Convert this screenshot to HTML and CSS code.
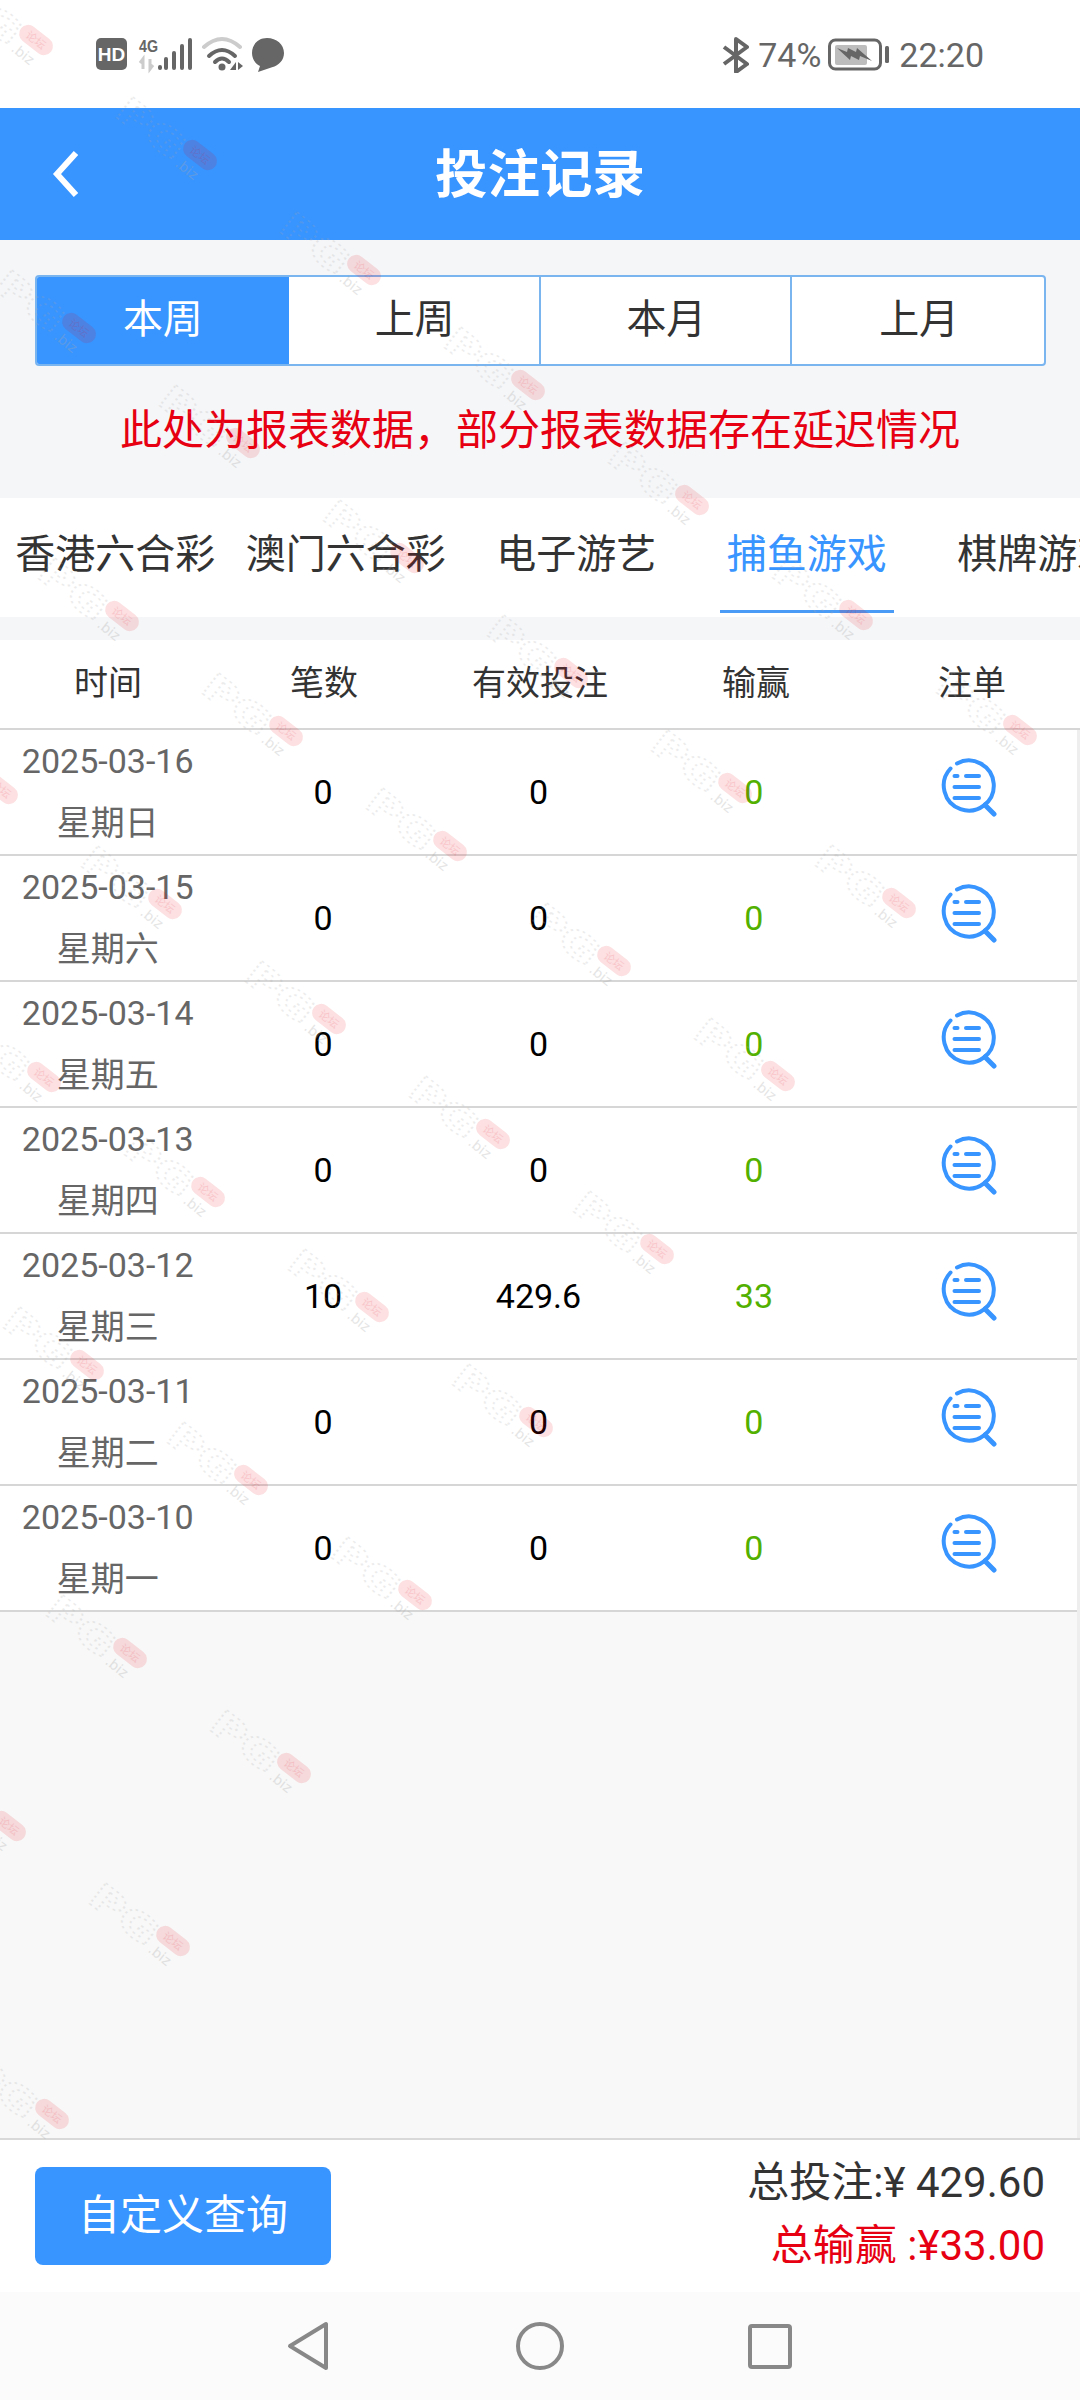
FILE: index.html
```html
<!DOCTYPE html>
<html lang="zh-CN">

<head>
  <meta charset="UTF-8">
  <meta name="viewport" content="width=device-width, initial-scale=1.0">
  <title>投注记录</title>
  <link rel="stylesheet" href="styles.css">
</head>

<body>
  <svg class="icon-defs" width="0" height="0">
    <defs>
      <symbol id="icon-detail" viewBox="0 0 60 60">
        <path class="detail-ring" d="M12.5 11.5A25 25 0 1 0 19 6.5" />
        <path class="detail-line" d="M16.5 19h3M28 19h13M16.5 30h24.5M16.5 41h24.5" />
        <path class="detail-handle" d="M47 48l9 9" />
      </symbol>
      <g id="mark" class="mark">
        <text class="mark-pg" x="-17" y="22" text-anchor="end" textLength="76" lengthAdjust="spacingAndGlyphs">PG</text>
        <rect class="mark-pill" x="-19" y="-9" width="38" height="18" rx="9" />
        <text class="mark-pill-text" x="0" y="4" text-anchor="middle">论坛</text>
        <text class="mark-biz" x="-14" y="24">.biz</text>
      </g>
    </defs>
  </svg>

  <div class="status-bar">
    <svg class="status-left" viewBox="95 36 195 38" width="195" height="38">
      <rect class="st-fill" x="96" y="38" width="31" height="32" rx="5" />
      <text class="st-hd" x="111.5" y="60.5" text-anchor="middle">HD</text>
      <text class="st-4g" x="139" y="52" textLength="19" lengthAdjust="spacingAndGlyphs">4G</text>
      <path class="st-dim" d="M143 69v-10l-3 4M150 59v10l3-4" />
      <rect class="st-fill" x="158" y="65" width="4" height="5" rx="2" />
      <rect class="st-fill" x="164" y="57" width="4" height="13" rx="2" />
      <rect class="st-fill" x="172" y="51" width="4" height="19" rx="2" />
      <rect class="st-fill" x="180" y="44" width="4" height="26" rx="2" />
      <rect class="st-fill" x="188" y="38" width="4" height="32" rx="2" />
      <path class="st-arc-dim" d="M204 47Q222 31 240 47" />
      <path class="st-arc" d="M209 56Q222 44 235 56M215 62Q222 55 229 62" />
      <circle class="st-fill" cx="222" cy="67" r="3.5" />
      <path class="st-fill" d="M236 62v8h-6zM238 62l5 4-5 4z" />
      <path class="st-fill" d="M267 38c9.500 0 17 6.500 17 15 0 7-5 12.500-12 14.300L258 72l2-6c-5-2.500-8-7.500-8-13 0-8.500 6-15 15-15z" />
    </svg>
    <div class="status-right">
      <svg viewBox="0 0 28 36" width="28" height="36">
        <path class="st-bt" d="M2 10l23 17-11 8V2l11 8L2 27" />
      </svg>
      <span class="status-pct">74%</span>
      <svg viewBox="0 0 62 34" width="62" height="34">
        <rect class="st-batt" x="1.500" y="2" width="51" height="29" rx="6" />
        <rect class="st-batt-level" x="7" y="7" width="32" height="20" rx="2" />
        <path class="st-fill" d="M9 10l10 4 1-4 8 4 1-4 15 13-12-5-1 4-8-4-1 4z" />
        <rect class="st-fill" x="57" y="8" width="4" height="17" rx="1.500" />
      </svg>
      <span class="status-time">22:20</span>
    </div>
  </div>

  <header class="top-bar">
    <svg class="back-icon" viewBox="0 0 30 48" width="30" height="48">
      <path d="M25 3L6 24l19 21" />
    </svg>
    <h1>投注记录</h1>
  </header>

  <div class="period-tabs">
    <div class="period-tab active">本周</div>
    <div class="period-tab">上周</div>
    <div class="period-tab">本月</div>
    <div class="period-tab">上月</div>
  </div>

  <p class="notice">此处为报表数据，部分报表数据存在延迟情况</p>

  <nav class="game-tabs">
    <div class="game-tab">香港六合彩</div>
    <div class="game-tab">澳门六合彩</div>
    <div class="game-tab">电子游艺</div>
    <div class="game-tab active"><span>捕鱼游戏</span></div>
    <div class="game-tab">棋牌游戏</div>
  </nav>

  <div class="table-head">
    <div>时间</div>
    <div>笔数</div>
    <div>有效投注</div>
    <div>输赢</div>
    <div>注单</div>
  </div>

  <main class="records">
    <div class="record-row">
      <div class="record-date">2025-03-16<br>星期日</div>
      <div>0</div>
      <div>0</div>
      <div class="win">0</div>
      <div><svg class="detail-icon"><use href="#icon-detail" /></svg></div>
    </div>
    <div class="record-row">
      <div class="record-date">2025-03-15<br>星期六</div>
      <div>0</div>
      <div>0</div>
      <div class="win">0</div>
      <div><svg class="detail-icon"><use href="#icon-detail" /></svg></div>
    </div>
    <div class="record-row">
      <div class="record-date">2025-03-14<br>星期五</div>
      <div>0</div>
      <div>0</div>
      <div class="win">0</div>
      <div><svg class="detail-icon"><use href="#icon-detail" /></svg></div>
    </div>
    <div class="record-row">
      <div class="record-date">2025-03-13<br>星期四</div>
      <div>0</div>
      <div>0</div>
      <div class="win">0</div>
      <div><svg class="detail-icon"><use href="#icon-detail" /></svg></div>
    </div>
    <div class="record-row">
      <div class="record-date">2025-03-12<br>星期三</div>
      <div>10</div>
      <div>429.6</div>
      <div class="win">33</div>
      <div><svg class="detail-icon"><use href="#icon-detail" /></svg></div>
    </div>
    <div class="record-row">
      <div class="record-date">2025-03-11<br>星期二</div>
      <div>0</div>
      <div>0</div>
      <div class="win">0</div>
      <div><svg class="detail-icon"><use href="#icon-detail" /></svg></div>
    </div>
    <div class="record-row">
      <div class="record-date">2025-03-10<br>星期一</div>
      <div>0</div>
      <div>0</div>
      <div class="win">0</div>
      <div><svg class="detail-icon"><use href="#icon-detail" /></svg></div>
    </div>
  </main>

  <footer class="summary">
    <button class="query-btn">自定义查询</button>
    <div class="totals">
      <div>总投注:¥ 429.60</div>
      <div class="totals-win">总输赢 :¥33.00</div>
    </div>
  </footer>

  <div class="nav-bar">
    <svg viewBox="0 0 48 52" width="48" height="52">
      <path d="M42 4v44L6 26z" />
    </svg>
    <svg viewBox="0 0 48 52" width="48" height="52">
      <circle cx="24" cy="26" r="22" />
    </svg>
    <svg viewBox="0 0 48 52" width="48" height="52">
      <rect x="2" y="6" width="40" height="41" rx="2" />
    </svg>
  </div>

  <!-- site watermark, repeats over the page -->
  <svg class="watermarks" viewBox="0 0 1080 2400" width="1080" height="2400">
    <use href="#mark" x="36" y="40" />
    <use href="#mark" x="200" y="155" />
    <use href="#mark" x="79" y="328" />
    <use href="#mark" x="364" y="270" />
    <use href="#mark" x="243" y="443" />
    <use href="#mark" x="122" y="616" />
    <use href="#mark" x="1" y="789" />
    <use href="#mark" x="528" y="385" />
    <use href="#mark" x="407" y="558" />
    <use href="#mark" x="286" y="731" />
    <use href="#mark" x="165" y="904" />
    <use href="#mark" x="44" y="1077" />
    <use href="#mark" x="692" y="500" />
    <use href="#mark" x="571" y="673" />
    <use href="#mark" x="450" y="846" />
    <use href="#mark" x="329" y="1019" />
    <use href="#mark" x="208" y="1192" />
    <use href="#mark" x="87" y="1365" />
    <use href="#mark" x="856" y="615" />
    <use href="#mark" x="735" y="788" />
    <use href="#mark" x="614" y="961" />
    <use href="#mark" x="493" y="1134" />
    <use href="#mark" x="372" y="1307" />
    <use href="#mark" x="251" y="1480" />
    <use href="#mark" x="130" y="1653" />
    <use href="#mark" x="9" y="1826" />
    <use href="#mark" x="1020" y="730" />
    <use href="#mark" x="899" y="903" />
    <use href="#mark" x="778" y="1076" />
    <use href="#mark" x="657" y="1249" />
    <use href="#mark" x="536" y="1422" />
    <use href="#mark" x="415" y="1595" />
    <use href="#mark" x="294" y="1768" />
    <use href="#mark" x="173" y="1941" />
    <use href="#mark" x="52" y="2114" />
  </svg>
</body>

</html>
```

FILE: styles.css
```css
body {
  position: relative;
  width: 1080px;
  height: 2400px;
  margin: 0;
  overflow: hidden;
  display: flex;
  flex-direction: column;
  font-family: Roboto, "Noto Sans CJK SC", sans-serif;
  color: #333;
  background-color: #f5f6f8;
}

.icon-defs {
  position: absolute;
}

/* status bar */
.status-bar {
  height: 108px;
  flex: none;
  box-sizing: border-box;
  padding: 36px 96px 0 95px;
  display: flex;
  justify-content: space-between;
  background-color: #fff;
}

.status-right {
  height: 38px;
  display: flex;
  align-items: center;
  font-size: 34px;
  color: #666;
}

.status-pct {
  margin: 0 7px 0 8px;
}

.status-time {
  margin-left: 9px;
}

.st-fill {
  fill: #666;
}

.st-hd {
  fill: #fff;
  font: bold 19px "Liberation Sans", sans-serif;
}

.st-4g {
  fill: #666;
  font: bold 16px "Liberation Sans", sans-serif;
}

.st-dim {
  fill: none;
  stroke: #ccc;
  stroke-width: 3;
}

.st-arc-dim,
.st-arc {
  fill: none;
  stroke-width: 4;
  stroke-linecap: round;
}

.st-arc-dim {
  stroke: #ccc;
}

.st-arc {
  stroke: #666;
}

.st-bt {
  fill: none;
  stroke: #666;
  stroke-width: 4;
  stroke-linejoin: round;
}

.st-batt {
  fill: none;
  stroke: #666;
  stroke-width: 3;
}

.st-batt-level {
  fill: #bdbdbd;
}

/* top bar */
.top-bar {
  height: 132px;
  flex: none;
  box-sizing: border-box;
  padding-bottom: 8px;
  display: flex;
  align-items: center;
  justify-content: center;
  position: relative;
  background-color: #3894ff;
}

.top-bar h1 {
  margin: 0;
  font-size: 52.500px;
  font-weight: 700;
  color: #fff;
}

.back-icon {
  position: absolute;
  left: 51px;
  top: 42px;
  fill: none;
  stroke: #fff;
  stroke-width: 6;
}

/* week and month switch */
.period-tabs {
  height: 91px;
  flex: none;
  margin: 35px 34px 0 35px;
  box-sizing: border-box;
  display: grid;
  grid-template-columns: repeat(4, 1fr);
  border: 2px solid #7ab5f0;
  border-radius: 4px;
  overflow: hidden;
  background-color: #fff;
}

.period-tab {
  display: flex;
  align-items: center;
  justify-content: center;
  padding: 0 0 10px 2px;
  font-size: 40px;
  border-right: 2px solid #7ab5f0;
}

.period-tab:last-child {
  border-right: 0;
}

.period-tab.active {
  color: #fff;
  background-color: #3894ff;
  border-right-color: #3894ff;
}

.notice {
  height: 132px;
  flex: none;
  box-sizing: border-box;
  margin: 0;
  padding-bottom: 12px;
  display: flex;
  align-items: center;
  justify-content: center;
  font-size: 42px;
  color: #e60012;
}

/* game type tabs */
.game-tabs {
  height: 119px;
  flex: none;
  display: flex;
  overflow: hidden;
  background-color: #fff;
}

.game-tab {
  width: 230.500px;
  flex: none;
  display: flex;
  justify-content: center;
  padding-top: 24px;
  box-sizing: border-box;
  font-size: 40px;
  white-space: nowrap;
}

.game-tab.active {
  color: #3894ff;
}

.game-tab.active span {
  height: 88px;
  padding: 0 7px;
  border-bottom: 3px solid #4a9bf5;
}

/* table */
.table-head {
  height: 90px;
  flex: none;
  margin-top: 23px;
  box-sizing: border-box;
  padding-bottom: 8px;
  display: grid;
  grid-template-columns: repeat(5, 1fr);
  align-items: center;
  text-align: center;
  font-size: 34px;
  border-bottom: 2px solid #d6d6d6;
  background-color: #fff;
}

.records {
  flex: 1;
  border-right: 3px solid #eee;
  background-color: #f8f8f8;
}

.record-row {
  height: 126px;
  box-sizing: border-box;
  display: grid;
  grid-template-columns: repeat(5, 1fr);
  align-items: center;
  text-align: center;
  font-size: 34px;
  color: #000;
  border-bottom: 2px solid #d6d6d6;
  background-color: #fff;
}

.record-date {
  line-height: 62px;
  color: #666;
}

.win {
  color: #52b000;
}

.detail-icon {
  display: block;
  width: 60px;
  height: 60px;
  margin: 0 auto 10px;
  transform: translateX(-1px);
}

.detail-ring,
.detail-line,
.detail-handle {
  fill: none;
  stroke: #3894ff;
  stroke-linecap: round;
}

.detail-ring {
  stroke-width: 4;
}

.detail-line {
  stroke-width: 4;
}

.detail-handle {
  stroke-width: 5;
}

/* footer */
.summary {
  height: 154px;
  flex: none;
  box-sizing: border-box;
  padding: 0 35px;
  display: flex;
  align-items: center;
  justify-content: space-between;
  border-top: 2px solid #d9d9d9;
  background-color: #fff;
}

.query-btn {
  width: 296px;
  height: 98px;
  padding: 0 0 10px;
  border: 0;
  border-radius: 8px;
  font-family: inherit;
  font-size: 42px;
  color: #fff;
  background-color: #3894ff;
}

.totals {
  margin-bottom: 4px;
  text-align: right;
  font-size: 42px;
  line-height: 63px;
}

.totals-win {
  color: #e60012;
}

.nav-bar {
  height: 108px;
  flex: none;
  display: flex;
  align-items: center;
  justify-content: center;
  gap: 184px;
  background-color: #fbfbfb;
}

.nav-bar svg {
  fill: none;
  stroke: #888;
  stroke-width: 4;
  stroke-linejoin: round;
}

/* watermark */
.watermarks {
  position: absolute;
  left: 0;
  top: 0;
  pointer-events: none;
}

.mark {
  transform: rotate(38deg);
}

.mark-pg {
  font: bold 36px "DejaVu Sans", sans-serif;
  fill: none;
  stroke: #aaa;
  stroke-width: 1.500;
  stroke-dasharray: 2 3;
  opacity: 0.22;
}

.mark-pill {
  fill: #e60012;
  opacity: 0.12;
}

.mark-pill-text {
  font-size: 11px;
  fill: #e60012;
  opacity: 0.12;
}

.mark-biz {
  font: 14px "DejaVu Sans", sans-serif;
  fill: #aaa;
  opacity: 0.3;
}
```
